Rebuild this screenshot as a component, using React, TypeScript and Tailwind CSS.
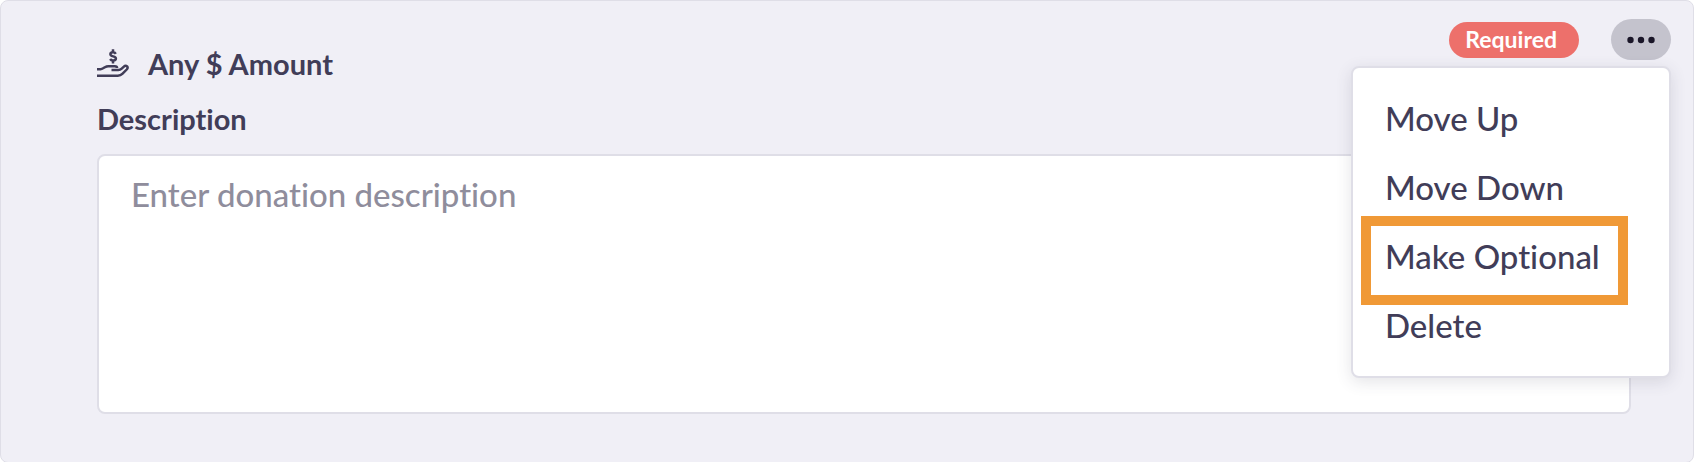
import { useState } from 'react';

interface MenuAction {
  id: string;
  label: string;
  highlighted?: boolean;
}

const MENU_ACTIONS: MenuAction[] = [
  { id: 'move-up', label: 'Move Up' },
  { id: 'move-down', label: 'Move Down' },
  { id: 'make-optional', label: 'Make Optional', highlighted: true },
  { id: 'delete', label: 'Delete' },
];

function DonationIcon() {
  return (
    <svg
      viewBox="0 0 32 30"
      className="h-[30px] w-8 shrink-0"
      fill="none"
      stroke="currentColor"
      strokeWidth="2.5"
      strokeLinejoin="round"
      aria-hidden="true"
    >
      <path d="M18.8 4.8c-.7-1.1-1.7-1.6-3-1.5-1.5.1-2.4.9-2.4 1.9 0 2.7 5.5 1.6 5.5 4.3 0 1.2-1.1 1.9-2.5 2-1.4.1-2.6-.4-3.3-1.5M16 .2v3M16 11.6v2.9" />
      <path d="M0 20.2h3.6c1.7 0 3-1 4.4-2 1-.7 2.1-1 3.4-1h6.4c1.3 0 2.3.7 2.3 1.8" />
      <path d="M14.5 21h6.8c1.5 0 2.4-.4 3.4-1.4l1.9-1.8c1.2-1.1 2.7-1.2 3.5-.4.7.8.6 2-.4 3.1l-4.1 4.2c-1.5 1.6-2.8 2.1-4.8 2.1H0" />
    </svg>
  );
}

function ActionsMenu() {
  const [isOpen, setIsOpen] = useState(true);

  return (
    <div className="relative">
      <button
        type="button"
        aria-label="More actions"
        aria-expanded={isOpen}
        onClick={() => setIsOpen(!isOpen)}
        className="flex h-[41px] w-[60px] items-center justify-center rounded-full bg-[#c4c3cd] text-[#1a1628]"
      >
        <svg viewBox="0 0 28 8" className="h-2 w-7" fill="currentColor" aria-hidden="true">
          <circle cx="3.5" cy="4" r="3.2" />
          <circle cx="14" cy="4" r="3.2" />
          <circle cx="24.5" cy="4" r="3.2" />
        </svg>
      </button>

      {isOpen && (
        <div
          role="menu"
          className="absolute top-full right-0 z-10 mt-1.5 w-80 rounded-lg border-2 border-[#dfdee7] bg-white py-4 shadow-[0_4px_16px_rgba(65,61,88,0.14)]"
        >
          {MENU_ACTIONS.map((action) => (
            <button
              key={action.id}
              type="button"
              role="menuitem"
              className="relative block w-full px-8 text-left text-[33px] leading-[69px] font-medium whitespace-nowrap"
            >
              {action.label}
              {action.highlighted && (
                <span className="pointer-events-none absolute -top-1.5 right-[41px] -bottom-3.5 left-2 border-10 border-[#f09936]" />
              )}
            </button>
          ))}
        </div>
      )}
    </div>
  );
}

export default function App() {
  return (
    <section className="min-h-screen rounded-lg border border-[#dfdee7] bg-[#f0eff6] pb-12 font-['Lato',sans-serif] text-[#413d58] [font-variant-ligatures:none]">
      <header className="flex items-start justify-between pt-[18px] pr-[22px] pl-24">
        <div className="flex items-center gap-[19px] pt-[27px]">
          <DonationIcon />
          <h2 className="text-[29px] leading-9 font-bold">Any $ Amount</h2>
        </div>
        <div className="flex items-center gap-8">
          <span className="flex h-9 items-center rounded-full bg-[#ed706b] pr-[22px] pl-4 text-[23px] font-bold text-white">
            Required
          </span>
          <ActionsMenu />
        </div>
      </header>

      <div className="flex flex-col gap-[17px] pt-[19px] pr-[62px] pl-24">
        <label htmlFor="description" className="text-[29px] leading-9 font-bold">
          Description
        </label>
        <textarea
          id="description"
          placeholder="Enter donation description"
          className="block h-[260px] w-full resize-none rounded-lg border-2 border-[#dfdee7] bg-white px-8 py-[18px] text-[33px] leading-10 font-medium outline-none placeholder:text-[#8f8d9c]"
        />
      </div>
    </section>
  );
}
